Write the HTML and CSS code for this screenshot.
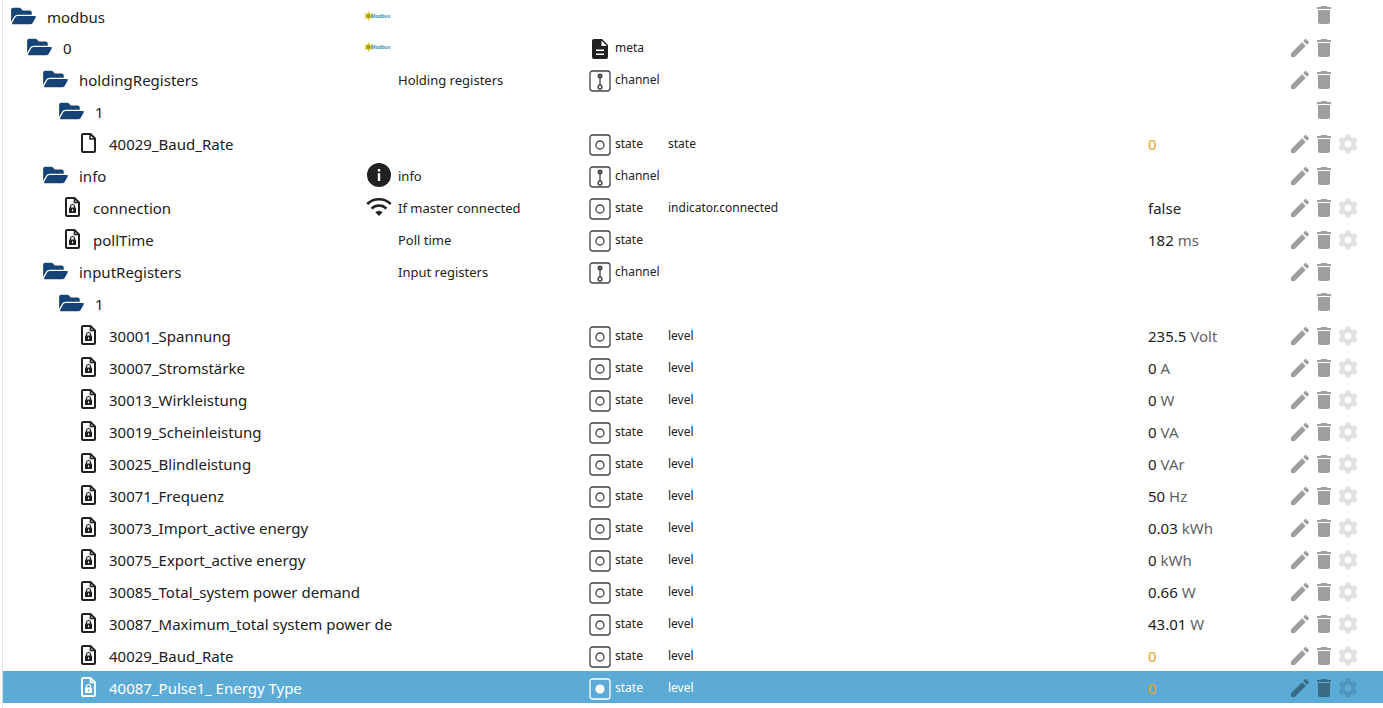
FILE: index.html
```html
<!DOCTYPE html>
<html lang="de">
<head>
  <meta charset="UTF-8" />
  <meta name="viewport" content="width=device-width, initial-scale=1" />
  <title>modbus</title>
  <link rel="stylesheet" href="styles.css">
</head>
<body>
  <!-- Icons -->
  <svg class="sprite" aria-hidden="true">
    <symbol id="i-folder" viewBox="0 0 576 512"><path d="M572.7 292.1 500.3 416.2A64 64 0 0 1 445 448H45c-18.5 0-30-20-20.700-36l72.400-124.200A64 64 0 0 1 152 256h400c18.500 0 30 20 20.700 36.100zM152 224h328v-48c0-26.500-21.500-48-48-48H272l-64-64H48C21.500 64 0 85.500 0 112v278l69-118.400C86.200 242.200 118 224 152 224z"/></symbol>
    <symbol id="i-file" viewBox="0 0 15 20"><path fill="none" stroke="currentColor" stroke-width="2" stroke-linejoin="round" d="M2 1h7.500L14 5.500V18a1 1 0 0 1-1 1H2a1 1 0 0 1-1-1V2a1 1 0 0 1 1-1z"/><path fill="none" stroke="currentColor" stroke-width="1.500" d="M9 1v5h5"/></symbol>
    <symbol id="i-lock" viewBox="0 0 15 20"><path fill="none" stroke="currentColor" stroke-width="2" stroke-linejoin="round" d="M2 1h7.500L14 5.500V18a1 1 0 0 1-1 1H2a1 1 0 0 1-1-1V2a1 1 0 0 1 1-1z"/><path fill="none" stroke="currentColor" stroke-width="1.500" d="M9.500 1v4.500H14"/><path fill="none" stroke="currentColor" stroke-width="1.200" d="M5.500 11V9.500a2 2 0 0 1 4 0V11"/><path fill-rule="evenodd" d="M4.500 10.500h6a.5.5 0 0 1 .5.5v4.500a.5.5 0 0 1-.5.5h-6a.5.5 0 0 1-.5-.5V11a.5.5 0 0 1 .5-.5zM7 12.200v2h1v-2z"/></symbol>
    <symbol id="i-info" viewBox="0 0 24 24"><path fill-rule="evenodd" d="M12 0a12 12 0 1 0 0 24 12 12 0 0 0 0-24zM10.800 6h2.400v2.400h-2.400zM10.800 10.200h2.400V18h-2.400z"/></symbol>
    <symbol id="i-wifi" viewBox="0 0 26 24"><g fill="none" stroke="currentColor" stroke-width="2.600"><path d="M1.200 9a17 17 0 0 1 23.600 0"/><path d="M5.600 13.600a10.500 10.500 0 0 1 14.800 0"/></g><path d="M13 21l-3.700-3.800a5.300 5.300 0 0 1 7.400 0z"/></symbol>
    <symbol id="i-meta" viewBox="0 0 22 22"><path d="M5 1h8l6 6v12a2 2 0 0 1-2 2H5a2 2 0 0 1-2-2V3a2 2 0 0 1 2-2z"/><path fill="#fff" d="M12.500 2.500V8H18zM7 11.500h8V13H7zM7 15.500h8V17H7z"/></symbol>
    <symbol id="i-channel" viewBox="0 0 22 22"><g fill="none" stroke="currentColor" stroke-width="1.300"><rect x="1" y="1" width="20" height="20" rx="2.500"/><circle cx="11" cy="17" r="2"/><path d="M11 7v8"/></g><circle cx="11" cy="6" r="2.500"/><circle cx="11" cy="6" r=".8" fill="#999"/></symbol>
    <symbol id="i-state" viewBox="0 0 22 22"><g fill="none" stroke="currentColor" stroke-width="1.300"><rect x="1" y="1" width="20" height="20" rx="2.500"/><circle cx="11" cy="11" r="4"/></g></symbol>
    <symbol id="i-state-on" viewBox="0 0 22 22"><rect x="1" y="1" width="20" height="20" rx="2.500" fill="none" stroke="currentColor" stroke-width="1.300"/><circle cx="11" cy="11" r="4.600"/></symbol>
    <symbol id="i-edit" viewBox="0 0 24 24"><path d="M3 17.250V21h3.750L17.810 9.940l-3.750-3.750L3 17.250zM20.710 7.040c.39-.39.39-1.020 0-1.410l-2.340-2.340c-.39-.39-1.020-.39-1.410 0l-1.830 1.830 3.750 3.750 1.830-1.830z"/></symbol>
    <symbol id="i-delete" viewBox="0 0 24 24"><path d="M6 19c0 1.100.9 2 2 2h8c1.100 0 2-.9 2-2V7H6v12zM19 4h-3.500l-1-1h-5l-1 1H5v2h14V4z"/></symbol>
    <symbol id="i-settings" viewBox="0 0 24 24"><path d="M19.140 12.940c.04-.3.06-.61.06-.94 0-.32-.02-.64-.07-.94l2.030-1.580c.18-.14.23-.41.12-.61l-1.920-3.320c-.12-.22-.37-.29-.59-.22l-2.390.96c-.5-.38-1.030-.7-1.620-.94l-.36-2.540c-.04-.24-.24-.41-.48-.41h-3.840c-.24 0-.43.17-.47.41l-.36 2.540c-.59.24-1.130.57-1.620.94l-2.390-.96c-.22-.08-.47 0-.59.22L2.740 8.870c-.12.21-.08.47.12.61l2.030 1.580c-.05.3-.09.63-.09.94s.02.64.07.94l-2.030 1.580c-.18.14-.23.41-.12.61l1.920 3.320c.12.22.37.29.59.22l2.390-.96c.5.38 1.030.7 1.620.94l.36 2.540c.05.24.24.41.48.41h3.840c.24 0 .44-.17.47-.41l.36-2.540c.59-.24 1.130-.56 1.620-.94l2.390.96c.22.08.47 0 .59-.22l1.920-3.320c.12-.22.07-.47-.12-.61l-2.010-1.580zM12 15.600c-1.980 0-3.600-1.620-3.600-3.600s1.620-3.600 3.600-3.600 3.600 1.620 3.600 3.600-1.620 3.600-3.600 3.600z"/></symbol>
    <symbol id="i-modbus" viewBox="0 0 28 10"><path fill="#d3c41c" d="M4.500 0l1.300 2.700 3-.4-1.500 2.600 1.500 2.500-3-.2L4.500 10 3.400 7.200.5 7.500 1.700 5 .5 2.400l2.900.3z"/><circle cx="4.500" cy="5" r="1.800" fill="#a09a25"/></symbol>
  </svg>

  <main class="tree">
    <table class="objects">
      <colgroup>
        <col class="col-id"><col class="col-name"><col class="col-type"><col class="col-role"><col class="col-value"><col class="col-buttons">
      </colgroup>
      <tbody>
        <tr class="virtual">
          <td><div class="id level-0"><svg class="folder"><use href="#i-folder"/></svg><span>modbus</span><svg class="logo" viewBox="0 0 28 10"><use href="#i-modbus"/><text x="7" y="7">Modbus</text></svg></div></td>
          <td></td><td></td><td></td><td></td>
          <td><div class="buttons"><button class="delete" aria-label="Delete"><svg><use href="#i-delete"/></svg></button></div></td>
        </tr>
        <tr>
          <td><div class="id level-1"><svg class="folder"><use href="#i-folder"/></svg><span>0</span><svg class="logo" viewBox="0 0 28 10"><use href="#i-modbus"/><text x="7" y="7">Modbus</text></svg></div></td>
          <td></td>
          <td><div class="type"><svg class="meta"><use href="#i-meta"/></svg><span>meta</span></div></td>
          <td></td><td></td>
          <td><div class="buttons"><button aria-label="Edit"><svg><use href="#i-edit"/></svg></button><button class="delete" aria-label="Delete"><svg><use href="#i-delete"/></svg></button></div></td>
        </tr>
        <tr>
          <td><div class="id level-2"><svg class="folder"><use href="#i-folder"/></svg><span>holdingRegisters</span></div></td>
          <td class="name">Holding registers</td>
          <td><div class="type"><svg><use href="#i-channel"/></svg><span>channel</span></div></td>
          <td></td><td></td>
          <td><div class="buttons"><button aria-label="Edit"><svg><use href="#i-edit"/></svg></button><button class="delete" aria-label="Delete"><svg><use href="#i-delete"/></svg></button></div></td>
        </tr>
        <tr class="virtual">
          <td><div class="id level-3"><svg class="folder"><use href="#i-folder"/></svg><span>1</span></div></td>
          <td></td><td></td><td></td><td></td>
          <td><div class="buttons"><button class="delete" aria-label="Delete"><svg><use href="#i-delete"/></svg></button></div></td>
        </tr>
        <tr>
          <td><div class="id level-4"><svg class="file"><use href="#i-file"/></svg><span>40029_Baud_Rate</span></div></td>
          <td></td>
          <td><div class="type"><svg><use href="#i-state"/></svg><span>state</span></div></td>
          <td class="role">state</td>
          <td class="value unack">0</td>
          <td><div class="buttons"><button aria-label="Edit"><svg><use href="#i-edit"/></svg></button><button class="delete" aria-label="Delete"><svg><use href="#i-delete"/></svg></button><button class="settings" aria-label="Settings"><svg><use href="#i-settings"/></svg></button></div></td>
        </tr>
        <tr>
          <td><div class="id level-2"><svg class="folder"><use href="#i-folder"/></svg><span>info</span><svg class="icon"><use href="#i-info"/></svg></div></td>
          <td class="name">info</td>
          <td><div class="type"><svg><use href="#i-channel"/></svg><span>channel</span></div></td>
          <td></td><td></td>
          <td><div class="buttons"><button aria-label="Edit"><svg><use href="#i-edit"/></svg></button><button class="delete" aria-label="Delete"><svg><use href="#i-delete"/></svg></button></div></td>
        </tr>
        <tr>
          <td><div class="id level-3"><svg class="file"><use href="#i-lock"/></svg><span>connection</span><svg class="icon"><use href="#i-wifi"/></svg></div></td>
          <td class="name">If master connected</td>
          <td><div class="type"><svg><use href="#i-state"/></svg><span>state</span></div></td>
          <td class="role">indicator.connected</td>
          <td class="value">false</td>
          <td><div class="buttons"><button aria-label="Edit"><svg><use href="#i-edit"/></svg></button><button class="delete" aria-label="Delete"><svg><use href="#i-delete"/></svg></button><button class="settings" aria-label="Settings"><svg><use href="#i-settings"/></svg></button></div></td>
        </tr>
        <tr>
          <td><div class="id level-3"><svg class="file"><use href="#i-lock"/></svg><span>pollTime</span></div></td>
          <td class="name">Poll time</td>
          <td><div class="type"><svg><use href="#i-state"/></svg><span>state</span></div></td>
          <td></td>
          <td class="value">182 <span>ms</span></td>
          <td><div class="buttons"><button aria-label="Edit"><svg><use href="#i-edit"/></svg></button><button class="delete" aria-label="Delete"><svg><use href="#i-delete"/></svg></button><button class="settings" aria-label="Settings"><svg><use href="#i-settings"/></svg></button></div></td>
        </tr>
        <tr>
          <td><div class="id level-2"><svg class="folder"><use href="#i-folder"/></svg><span>inputRegisters</span></div></td>
          <td class="name">Input registers</td>
          <td><div class="type"><svg><use href="#i-channel"/></svg><span>channel</span></div></td>
          <td></td><td></td>
          <td><div class="buttons"><button aria-label="Edit"><svg><use href="#i-edit"/></svg></button><button class="delete" aria-label="Delete"><svg><use href="#i-delete"/></svg></button></div></td>
        </tr>
        <tr class="virtual">
          <td><div class="id level-3"><svg class="folder"><use href="#i-folder"/></svg><span>1</span></div></td>
          <td></td><td></td><td></td><td></td>
          <td><div class="buttons"><button class="delete" aria-label="Delete"><svg><use href="#i-delete"/></svg></button></div></td>
        </tr>
        <tr>
          <td><div class="id level-4"><svg class="file"><use href="#i-lock"/></svg><span>30001_Spannung</span></div></td>
          <td></td>
          <td><div class="type"><svg><use href="#i-state"/></svg><span>state</span></div></td>
          <td class="role">level</td>
          <td class="value">235.5 <span>Volt</span></td>
          <td><div class="buttons"><button aria-label="Edit"><svg><use href="#i-edit"/></svg></button><button class="delete" aria-label="Delete"><svg><use href="#i-delete"/></svg></button><button class="settings" aria-label="Settings"><svg><use href="#i-settings"/></svg></button></div></td>
        </tr>
        <tr>
          <td><div class="id level-4"><svg class="file"><use href="#i-lock"/></svg><span>30007_Stromstärke</span></div></td>
          <td></td>
          <td><div class="type"><svg><use href="#i-state"/></svg><span>state</span></div></td>
          <td class="role">level</td>
          <td class="value">0 <span>A</span></td>
          <td><div class="buttons"><button aria-label="Edit"><svg><use href="#i-edit"/></svg></button><button class="delete" aria-label="Delete"><svg><use href="#i-delete"/></svg></button><button class="settings" aria-label="Settings"><svg><use href="#i-settings"/></svg></button></div></td>
        </tr>
        <tr>
          <td><div class="id level-4"><svg class="file"><use href="#i-lock"/></svg><span>30013_Wirkleistung</span></div></td>
          <td></td>
          <td><div class="type"><svg><use href="#i-state"/></svg><span>state</span></div></td>
          <td class="role">level</td>
          <td class="value">0 <span>W</span></td>
          <td><div class="buttons"><button aria-label="Edit"><svg><use href="#i-edit"/></svg></button><button class="delete" aria-label="Delete"><svg><use href="#i-delete"/></svg></button><button class="settings" aria-label="Settings"><svg><use href="#i-settings"/></svg></button></div></td>
        </tr>
        <tr>
          <td><div class="id level-4"><svg class="file"><use href="#i-lock"/></svg><span>30019_Scheinleistung</span></div></td>
          <td></td>
          <td><div class="type"><svg><use href="#i-state"/></svg><span>state</span></div></td>
          <td class="role">level</td>
          <td class="value">0 <span>VA</span></td>
          <td><div class="buttons"><button aria-label="Edit"><svg><use href="#i-edit"/></svg></button><button class="delete" aria-label="Delete"><svg><use href="#i-delete"/></svg></button><button class="settings" aria-label="Settings"><svg><use href="#i-settings"/></svg></button></div></td>
        </tr>
        <tr>
          <td><div class="id level-4"><svg class="file"><use href="#i-lock"/></svg><span>30025_Blindleistung</span></div></td>
          <td></td>
          <td><div class="type"><svg><use href="#i-state"/></svg><span>state</span></div></td>
          <td class="role">level</td>
          <td class="value">0 <span>VAr</span></td>
          <td><div class="buttons"><button aria-label="Edit"><svg><use href="#i-edit"/></svg></button><button class="delete" aria-label="Delete"><svg><use href="#i-delete"/></svg></button><button class="settings" aria-label="Settings"><svg><use href="#i-settings"/></svg></button></div></td>
        </tr>
        <tr>
          <td><div class="id level-4"><svg class="file"><use href="#i-lock"/></svg><span>30071_Frequenz</span></div></td>
          <td></td>
          <td><div class="type"><svg><use href="#i-state"/></svg><span>state</span></div></td>
          <td class="role">level</td>
          <td class="value">50 <span>Hz</span></td>
          <td><div class="buttons"><button aria-label="Edit"><svg><use href="#i-edit"/></svg></button><button class="delete" aria-label="Delete"><svg><use href="#i-delete"/></svg></button><button class="settings" aria-label="Settings"><svg><use href="#i-settings"/></svg></button></div></td>
        </tr>
        <tr>
          <td><div class="id level-4"><svg class="file"><use href="#i-lock"/></svg><span>30073_Import_active energy</span></div></td>
          <td></td>
          <td><div class="type"><svg><use href="#i-state"/></svg><span>state</span></div></td>
          <td class="role">level</td>
          <td class="value">0.03 <span>kWh</span></td>
          <td><div class="buttons"><button aria-label="Edit"><svg><use href="#i-edit"/></svg></button><button class="delete" aria-label="Delete"><svg><use href="#i-delete"/></svg></button><button class="settings" aria-label="Settings"><svg><use href="#i-settings"/></svg></button></div></td>
        </tr>
        <tr>
          <td><div class="id level-4"><svg class="file"><use href="#i-lock"/></svg><span>30075_Export_active energy</span></div></td>
          <td></td>
          <td><div class="type"><svg><use href="#i-state"/></svg><span>state</span></div></td>
          <td class="role">level</td>
          <td class="value">0 <span>kWh</span></td>
          <td><div class="buttons"><button aria-label="Edit"><svg><use href="#i-edit"/></svg></button><button class="delete" aria-label="Delete"><svg><use href="#i-delete"/></svg></button><button class="settings" aria-label="Settings"><svg><use href="#i-settings"/></svg></button></div></td>
        </tr>
        <tr>
          <td><div class="id level-4"><svg class="file"><use href="#i-lock"/></svg><span>30085_Total_system power demand</span></div></td>
          <td></td>
          <td><div class="type"><svg><use href="#i-state"/></svg><span>state</span></div></td>
          <td class="role">level</td>
          <td class="value">0.66 <span>W</span></td>
          <td><div class="buttons"><button aria-label="Edit"><svg><use href="#i-edit"/></svg></button><button class="delete" aria-label="Delete"><svg><use href="#i-delete"/></svg></button><button class="settings" aria-label="Settings"><svg><use href="#i-settings"/></svg></button></div></td>
        </tr>
        <tr>
          <td><div class="id level-4"><svg class="file"><use href="#i-lock"/></svg><span>30087_Maximum_total system power de</span></div></td>
          <td></td>
          <td><div class="type"><svg><use href="#i-state"/></svg><span>state</span></div></td>
          <td class="role">level</td>
          <td class="value">43.01 <span>W</span></td>
          <td><div class="buttons"><button aria-label="Edit"><svg><use href="#i-edit"/></svg></button><button class="delete" aria-label="Delete"><svg><use href="#i-delete"/></svg></button><button class="settings" aria-label="Settings"><svg><use href="#i-settings"/></svg></button></div></td>
        </tr>
        <tr>
          <td><div class="id level-4"><svg class="file"><use href="#i-lock"/></svg><span>40029_Baud_Rate</span></div></td>
          <td></td>
          <td><div class="type"><svg><use href="#i-state"/></svg><span>state</span></div></td>
          <td class="role">level</td>
          <td class="value unack">0</td>
          <td><div class="buttons"><button aria-label="Edit"><svg><use href="#i-edit"/></svg></button><button class="delete" aria-label="Delete"><svg><use href="#i-delete"/></svg></button><button class="settings" aria-label="Settings"><svg><use href="#i-settings"/></svg></button></div></td>
        </tr>
        <tr class="selected">
          <td><div class="id level-4"><svg class="file"><use href="#i-lock"/></svg><span>40087_Pulse1_ Energy Type</span></div></td>
          <td></td>
          <td><div class="type"><svg><use href="#i-state-on"/></svg><span>state</span></div></td>
          <td class="role">level</td>
          <td class="value unack">0</td>
          <td><div class="buttons"><button aria-label="Edit"><svg><use href="#i-edit"/></svg></button><button class="delete" aria-label="Delete"><svg><use href="#i-delete"/></svg></button><button class="settings" aria-label="Settings"><svg><use href="#i-settings"/></svg></button></div></td>
        </tr>
      </tbody>
    </table>
  </main>
</body>
</html>
```
FILE: styles.css
```css
* {
  box-sizing: border-box;
}
body {
  margin: 0;
  background: #fff;
  color: #212121;
  font-family: "Noto Sans", "Open Sans", sans-serif;
  font-size: 15px;
}
svg {
  display: block;
  flex: none;
  fill: currentColor;
}
.sprite {
  display: none;
}
.tree {
  min-height: 100vh;
  margin-left: 2px;
  border-left: 1px solid #e0e0e0;
}
.objects {
  width: 100%;
  table-layout: fixed;
  border-collapse: collapse;
}
.col-id { width: 395px; }
.col-name { width: 191px; }
.col-type { width: 79px; }
.col-value { width: 140px; }
.col-buttons { width: 95px; }
td {
  height: 32px;
  padding: 0;
  line-height: 20px;
  white-space: nowrap;
}
tr:first-child td {
  height: 31px;
}

/* id column */
.id {
  display: flex;
  align-items: center;
  padding-right: 6px;
}
.id span {
  padding-top: 2px;
}
.level-0 { padding-left: 8px; }
.level-1 { padding-left: 24px; }
.level-2 { padding-left: 40px; }
.level-3 { padding-left: 56px; }
.level-4 { padding-left: 72px; }
.folder {
  width: 25px;
  height: 22px;
  margin-right: 11px;
  color: #164477;
}
.file {
  width: 15px;
  height: 20px;
  margin-left: 6px;
  margin-right: 13px;
}
.icon {
  width: 26px;
  height: 24px;
  margin-left: auto;
}
.logo {
  width: 28px;
  height: 10px;
  margin-left: auto;
}
.logo text {
  fill: #2b8fb0;
  font: italic bold 5px "Liberation Sans", sans-serif;
}

.name, .role, .value {
  padding-top: 2px;
}
.name {
  font-size: 13px;
}
.type, .role {
  font-size: 12px;
}
.type {
  display: flex;
  align-items: center;
  gap: 4px;
}
.type span {
  padding-top: 2px;
}
.type svg {
  width: 22px;
  height: 22px;
  margin-top: 4px;
  color: #424242;
}
.type .meta {
  color: #212121;
}
.value span {
  color: #616161;
}
.value.unack {
  color: #e8a317;
}

/* buttons */
.buttons {
  display: flex;
  height: 24px;
  margin-top: 2px;
}
.virtual .buttons {
  margin-top: 0;
  margin-bottom: 2px;
}
button {
  width: 24px;
  height: 24px;
  padding: 0;
  border: none;
  background: none;
  color: rgba(0, 0, 0, 0.38);
  cursor: pointer;
}
button svg {
  width: 24px;
  height: 24px;
}
.virtual .delete {
  margin-left: 24px;
}
.settings {
  color: rgba(0, 0, 0, 0.12);
}

.selected {
  background: #5cabd6;
  color: #fff;
}
.selected .type svg {
  color: #fff;
}
```
